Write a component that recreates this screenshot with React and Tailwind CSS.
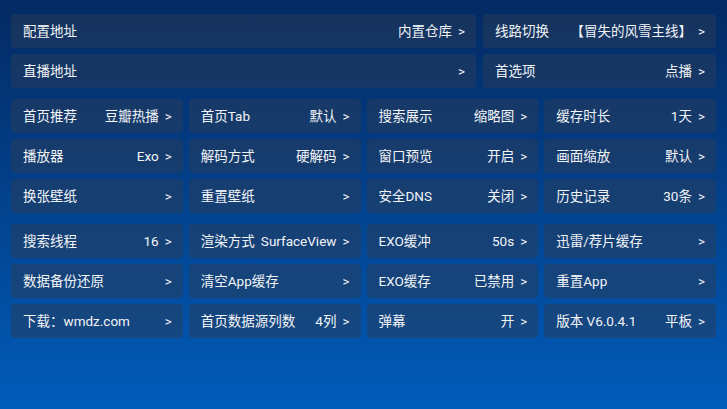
import React from 'react';

const groupA = [
  ['首页推荐', '豆瓣热播'],
  ['首页Tab', '默认'],
  ['搜索展示', '缩略图'],
  ['缓存时长', '1天'],
  ['播放器', 'Exo'],
  ['解码方式', '硬解码'],
  ['窗口预览', '开启'],
  ['画面缩放', '默认'],
  ['换张壁纸', ''],
  ['重置壁纸', ''],
  ['安全DNS', '关闭'],
  ['历史记录', '30条'],
];

const groupB = [
  ['搜索线程', '16'],
  ['渲染方式', 'SurfaceView'],
  ['EXO缓冲', '50s'],
  ['迅雷/荐片缓存', ''],
  ['数据备份还原', ''],
  ['清空App缓存', ''],
  ['EXO缓存', '已禁用'],
  ['重置App', ''],
  ['下载：wmdz.com', ''],
  ['首页数据源列数', '4列'],
  ['弹幕', '开'],
  ['版本 V6.0.4.1', '平板'],
];

function Item({ label, value, className = '' }) {
  return (
    <div
      className={`h-[34px] min-w-0 flex items-center justify-between pl-[12px] pr-[11px] rounded-[4px] bg-[rgba(42,60,88,0.5)] text-[13.5px] text-[#f2f4f7] whitespace-nowrap ${className}`}
    >
      <span>{label}</span>
      <span className="flex items-center gap-[6px]">
        {value && <span>{value}</span>}
        <span>&gt;</span>
      </span>
    </div>
  );
}

export default function App() {
  return (
    <div
      className="w-[727px] h-[409px] overflow-hidden bg-gradient-to-b from-[#032a63] to-[#005cba] px-[11px] pt-[14px]"
      style={{ fontFamily: 'Roboto, "Noto Sans CJK SC", sans-serif' }}
    >
      <div className="flex flex-col gap-[6px]">
        <div className="flex gap-[7px]">
          <Item className="w-[465px] shrink-0" label="配置地址" value="内置仓库" />
          <Item className="flex-1" label="线路切换" value="【冒失的风雪主线】" />
        </div>
        <div className="flex gap-[7px]">
          <Item className="w-[465px] shrink-0" label="直播地址" value="" />
          <Item className="flex-1" label="首选项" value="点播" />
        </div>
      </div>

      <div className="grid grid-cols-4 gap-[6px] mt-[11px]">
        {groupA.map(([l, v]) => (
          <Item key={l} label={l} value={v} />
        ))}
      </div>

      <div className="grid grid-cols-4 gap-[6px] mt-[11px]">
        {groupB.map(([l, v]) => (
          <Item key={l} label={l} value={v} />
        ))}
      </div>
    </div>
  );
}
